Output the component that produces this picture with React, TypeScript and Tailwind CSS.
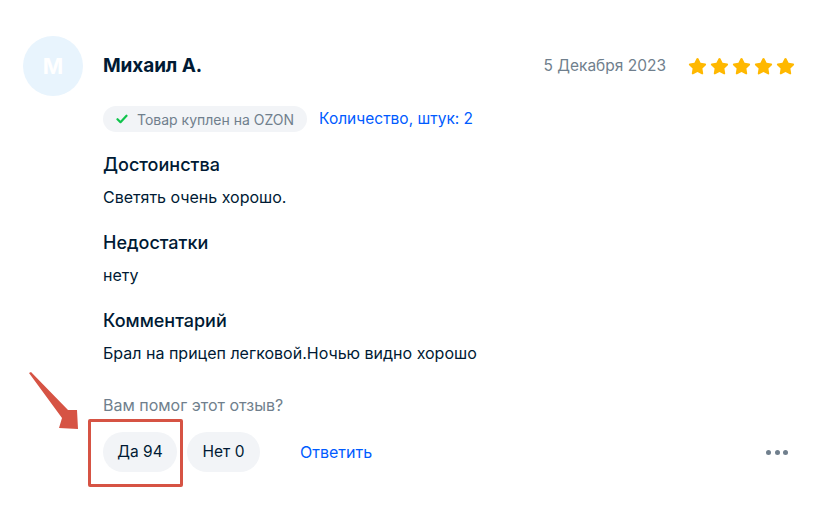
import { Fragment } from "react";

const sections = [
  { title: "Достоинства", text: "Светять очень хорошо." },
  { title: "Недостатки", text: "нету" },
  { title: "Комментарий", text: "Брал на прицеп легковой.Ночью видно хорошо" },
];

const Star = () => (
  <svg width="21" height="21" viewBox="0 0 24 24" className="block">
    <path
      d="M12 2.2c.5 0 .9.3 1.1.7l2.4 4.9 5.4.8c.9.1 1.3 1.2.6 1.9l-3.9 3.8.9 5.4c.2.9-.8 1.6-1.6 1.2L12 18.3l-4.9 2.6c-.8.4-1.8-.3-1.6-1.2l.9-5.4-3.9-3.8c-.7-.7-.3-1.8.6-1.9l5.4-.8 2.4-4.9c.2-.4.6-.7 1.1-.7z"
      fill="#ffb800"
    />
  </svg>
);

const App = () => {
  return (
    <div className="relative w-[833px] h-[510px] bg-white overflow-hidden font-['Inter',sans-serif] text-[#001a34]">
      <div className="flex gap-5 pl-[23px] pr-[38px] pt-[36px]">
        {/* avatar */}
        <div className="w-[60px] h-[60px] shrink-0 rounded-full bg-[#e8f4fd] flex items-center justify-center">
          <span className="text-white text-[22px] font-bold">М</span>
        </div>

        <div className="flex-1 flex flex-col">
          <div className="h-[60px] flex items-center justify-between">
            <span className="text-[19px] font-bold tracking-[-0.1px]">Михаил А.</span>
            <div className="flex items-center gap-[21px]">
              <span className="text-[15.5px] text-[#707f8d]">5 Декабря 2023</span>
              <div className="flex gap-[1px] mr-[-1px]">
                <Star />
                <Star />
                <Star />
                <Star />
                <Star />
              </div>
            </div>
          </div>

          <div className="mt-[10px] flex items-center gap-3">
            <div className="h-[26px] px-[13px] rounded-full bg-[#f2f4f7] flex items-center gap-[9px]">
              <svg width="12" height="10" viewBox="0 0 12 10">
                <path d="M1.5 5.2l3 3 6-6.5" stroke="#10c44c" strokeWidth="2.2" fill="none" strokeLinecap="round" strokeLinejoin="round" />
              </svg>
              <span className="text-[14px] text-[#707f8d]">Товар куплен на OZON</span>
            </div>
            <span className="text-[15.5px] text-[#005bff]">Количество, штук: 2</span>
          </div>

          <div className="mt-[20px] flex flex-col">
            {sections.map((s, i) => (
              <Fragment key={s.title}>
                <div className={`text-[18px] font-medium leading-[25px] ${i > 0 ? "mt-[22px]" : ""}`}>{s.title}</div>
                <div className="mt-[9px] text-[16px] leading-[22px]">{s.text}</div>
              </Fragment>
            ))}
          </div>

          <div className="mt-[30px] text-[16px] leading-[22px] text-[#707f8d]">Вам помог этот отзыв?</div>

          <div className="mt-[16px] flex items-center">
            <button className="h-[40px] w-[74px] rounded-full bg-[#f2f4f7] text-[15.5px]">Да 94</button>
            <button className="ml-[10px] h-[40px] w-[73px] rounded-full bg-[#f2f4f7] text-[15.5px]">Нет 0</button>
            <button className="ml-[40px] text-[16px] text-[#005bff]">Ответить</button>
            <div className="ml-auto mr-[7px] flex gap-[3.5px]">
              <span className="w-[5px] h-[5px] rounded-full bg-[#707f8d]" />
              <span className="w-[5px] h-[5px] rounded-full bg-[#707f8d]" />
              <span className="w-[5px] h-[5px] rounded-full bg-[#707f8d]" />
            </div>
          </div>
        </div>
      </div>

      {/* annotation overlay */}
      <div className="absolute left-[88px] top-[419px] w-[95px] h-[68px] border-[3px] border-[#d65344] rounded-[2px]" />
      <svg className="absolute left-0 top-0" width="833" height="510">
        <polygon points="29,373 31,372 68,410 77,410 78,429 59,428 62,418" fill="#d65344" />
      </svg>
    </div>
  );
};

export default App;
